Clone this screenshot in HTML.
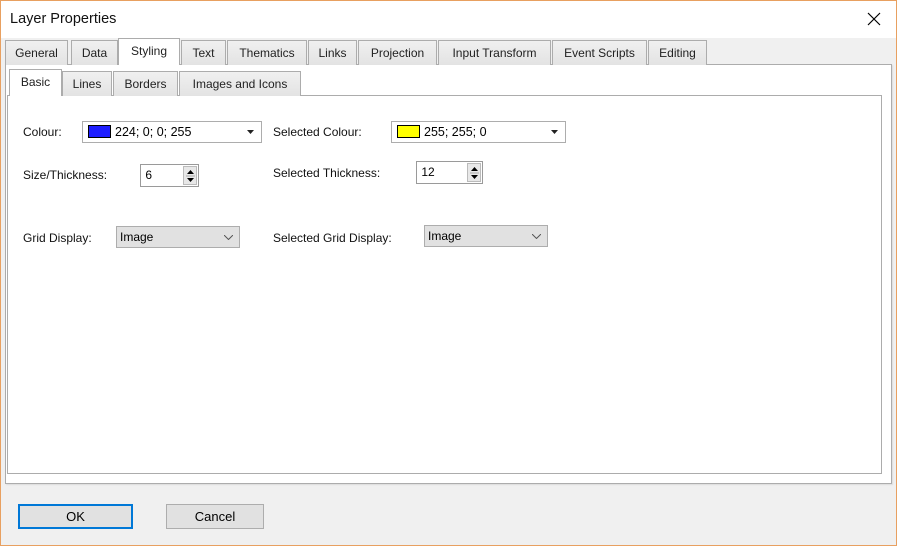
<!DOCTYPE html>
<html><head><style>
*{box-sizing:border-box;margin:0;padding:0}
body{width:897px;height:546px;overflow:hidden;background:#f0f0f0;font-family:"Liberation Sans",sans-serif;font-size:12px;color:#000;position:relative}
.a{position:absolute}
.win{left:0;top:0;width:897px;height:546px;border:1px solid #e8a060}
.title{left:1px;top:1px;width:895px;height:37px;background:#fff}
.tab{position:absolute;top:40px;height:25px;background:linear-gradient(#f0f0f0,#e3e3e3);border:1px solid #acacac;border-bottom:none;text-align:center;line-height:24px;color:#222}
.tab.s{top:38px;height:27px;background:#fff;z-index:2}
.t2{top:71px;height:25px}
.t2.s{top:69px;height:27px}
.lbl{position:absolute;color:#111}
.combo{position:absolute;background:#fff;border:1px solid #adadad}
.sw{position:absolute;left:5px;top:3px;width:23px;height:13px;border:1px solid #000}
.gcombo{position:absolute;background:#e1e1e1;border:1px solid #adadad;height:22px;line-height:20px;padding-left:3px}
.spin{position:absolute;background:#fff;border:1px solid #9a9a9a;line-height:20px;padding-left:1px}
.btn{position:absolute;top:504px;height:25px;background:#e1e1e1;border:1px solid #adadad;text-align:center;line-height:23px;font-size:13px}
</style></head><body>
<div class="a win"></div>
<div class="a title"></div>
<div class="a" style="left:10px;top:11px;font-size:14.5px;color:#111">Layer Properties</div>
<svg class="a" style="left:866px;top:11px" width="16" height="16"><path d="M2 2L14 14M14 2L2 14" stroke="#000" stroke-width="1.2"/></svg>
<div class="a" style="left:5px;top:64px;width:887px;height:420px;background:#fff;border:1px solid #acacac;box-shadow:1px 1px 1px #ddd"></div>
<div class="tab" style="left:5px;width:63px">General</div>
<div class="tab" style="left:71px;width:47px">Data</div>
<div class="tab s" style="left:118px;width:62px">Styling</div>
<div class="tab" style="left:181px;width:45px">Text</div>
<div class="tab" style="left:227px;width:80px">Thematics</div>
<div class="tab" style="left:308px;width:49px">Links</div>
<div class="tab" style="left:358px;width:79px">Projection</div>
<div class="tab" style="left:438px;width:113px">Input Transform</div>
<div class="tab" style="left:552px;width:95px">Event Scripts</div>
<div class="tab" style="left:648px;width:59px">Editing</div>
<div class="a" style="left:7px;top:95px;width:875px;height:379px;background:#fff;border:1px solid #acacac"></div>
<div class="tab t2 s" style="left:9px;width:53px">Basic</div>
<div class="tab t2" style="left:62px;width:50px">Lines</div>
<div class="tab t2" style="left:113px;width:65px">Borders</div>
<div class="tab t2" style="left:179px;width:122px">Images and Icons</div>

<div class="lbl" style="left:23px;top:125px">Colour:</div>
<div class="combo" style="left:82px;top:121px;width:180px;height:22px"><div class="sw" style="background:#1e1eff"></div><span class="a" style="left:32px;top:3px;font-size:12.5px">224; 0; 0; 255</span><svg class="a" style="left:164px;top:8px" width="7" height="4"><path d="M0 0H7L3.5 4Z" fill="#222"/></svg></div>
<div class="lbl" style="left:23px;top:168px">Size/Thickness:</div>
<div class="spin" style="left:140px;top:164px;width:59px;height:23px">&nbsp;6<div class="a" style="left:42px;top:1px;width:14px;height:19px;background:#e8e8e8;border:1px solid #bbb"><svg class="a" style="left:2px;top:2px" width="9" height="14"><path d="M1 5L4.5 1L8 5ZM1 9L4.5 13L8 9Z" fill="#000"/><path d="M0 7H9" stroke="#aaa"/></svg></div></div>
<div class="lbl" style="left:23px;top:231px">Grid Display:</div>
<div class="gcombo" style="left:116px;top:226px;width:124px">Image<svg class="a" style="left:107px;top:8px" width="9" height="5"><path d="M0 0L4.5 4.5L9 0" stroke="#555" fill="none"/></svg></div>

<div class="lbl" style="left:273px;top:125px">Selected Colour:</div>
<div class="combo" style="left:391px;top:121px;width:175px;height:22px"><div class="sw" style="background:#ffff00"></div><span class="a" style="left:32px;top:3px;font-size:12.5px">255; 255; 0</span><svg class="a" style="left:159px;top:8px" width="7" height="4"><path d="M0 0H7L3.5 4Z" fill="#222"/></svg></div>
<div class="lbl" style="left:273px;top:166px">Selected Thickness:</div>
<div class="spin" style="left:416px;top:161px;width:67px;height:23px">&nbsp;12<div class="a" style="left:50px;top:1px;width:14px;height:19px;background:#e8e8e8;border:1px solid #bbb"><svg class="a" style="left:2px;top:2px" width="9" height="14"><path d="M1 5L4.5 1L8 5ZM1 9L4.5 13L8 9Z" fill="#000"/><path d="M0 7H9" stroke="#aaa"/></svg></div></div>
<div class="lbl" style="left:273px;top:231px">Selected Grid Display:</div>
<div class="gcombo" style="left:424px;top:225px;width:124px">Image<svg class="a" style="left:107px;top:8px" width="9" height="5"><path d="M0 0L4.5 4.5L9 0" stroke="#555" fill="none"/></svg></div>

<div class="btn" style="left:18px;width:115px;border:2px solid #0078d7;line-height:21px">OK</div>
<div class="btn" style="left:166px;width:98px">Cancel</div>
</body></html>
